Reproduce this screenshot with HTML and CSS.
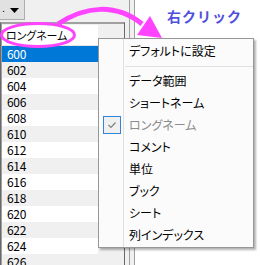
FILE: index.html
```html
<!DOCTYPE html>
<html lang="ja">
<head>
<meta charset="utf-8">
<link rel="stylesheet" href="styles.css">
</head>
<body>
<div class="page">
  <div class="panel">
    <div class="toolbar">
      <div class="dd"><span class="dot">.</span><svg class="tri" width="9" height="5" viewBox="0 0 9 5"><polygon points="0,0 9,0 4.5,5" fill="#000"/></svg></div>
    </div>
    <div class="grid">
      <div class="col">
        <div class="hdr">ロングネーム</div>
        <div class="row sel">600</div>
        <div class="row alt">602</div>
        <div class="row">604</div>
        <div class="row alt">606</div>
        <div class="row">608</div>
        <div class="row alt">610</div>
        <div class="row">612</div>
        <div class="row alt">614</div>
        <div class="row">616</div>
        <div class="row alt">618</div>
        <div class="row">620</div>
        <div class="row alt">622</div>
        <div class="row">624</div>
        <div class="row alt">626</div>
      </div>
    </div>
  </div>

  <div class="menu">
    <div class="item"><span class="ic"></span><span class="tx">デフォルトに設定</span></div>
    <div class="sep"></div>
    <div class="item"><span class="ic"></span><span class="tx">データ範囲</span></div>
    <div class="item"><span class="ic"></span><span class="tx">ショートネーム</span></div>
    <div class="item dis"><span class="ic"><span class="chk"><svg width="16" height="16" viewBox="0 0 16 16"><polyline points="4.5,8 7,10.5 11.5,5.5" fill="none" stroke="#808080" stroke-width="1.2"/></svg></span></span><span class="tx">ロングネーム</span></div>
    <div class="item"><span class="ic"></span><span class="tx">コメント</span></div>
    <div class="item"><span class="ic"></span><span class="tx">単位</span></div>
    <div class="item"><span class="ic"></span><span class="tx">ブック</span></div>
    <div class="item"><span class="ic"></span><span class="tx">シート</span></div>
    <div class="item"><span class="ic"></span><span class="tx">列インデックス</span></div>
  </div>

  <div class="note">右クリック</div>

  <svg class="anno" width="260" height="265" viewBox="0 0 260 265">
    <ellipse cx="38" cy="35" rx="36.5" ry="11.5" fill="none" stroke="#ff44ff" stroke-width="3"/>
    <path d="M58 24 C 85 6, 116 3, 142 24" fill="none" stroke="#ff44ff" stroke-width="5"/>
    <polygon points="162,38 137,35 150,16" fill="#ff44ff"/>
  </svg>
</div>
</body>
</html>
```

FILE: styles.css
```css
html, body {
  margin: 0;
  padding: 0;
  background: #ffffff;
}

body {
  font-family: "Noto Sans CJK JP", sans-serif;
  color: #000;
}

.page {
  position: relative;
  width: 260px;
  height: 265px;
  overflow: hidden;
  display: flex;
}

.panel {
  width: 135px;
  height: 265px;
  box-sizing: border-box;
  background: #f0f0f0;
  border-right: 1px solid #a0a0a0;
  box-shadow: inset -4px 0 0 #f0f0f0, inset -5px 0 0 #a0a0a0;
  display: flex;
  flex-direction: column;
}

.toolbar {
  height: 22px;
  flex: none;
}

.dd {
  width: 25px;
  height: 20px;
  box-sizing: border-box;
  border-right: 1px solid #adadad;
  border-bottom: 1px solid #adadad;
  background: #e1e1e1;
  display: flex;
  align-items: center;
  padding-left: 2px;
  gap: 5px;
}

.dot {
  font-family: "Liberation Sans", sans-serif;
  font-size: 11px;
  line-height: 11px;
  margin-top: -2px;
}

.tri {
  display: block;
  margin-top: 1px;
}

.grid {
  width: 125px;
  flex: 1;
  min-height: 0;
  overflow: hidden;
  box-sizing: border-box;
  border-top: 1px solid #a0a0a0;
  border-left: 1px solid #696969;
  border-right: 1px solid #696969;
  padding: 2px 0 0 1px;
  box-shadow: inset 1px 1px 0 #a0a0a0;
  background: #f0f0f0;
}

.col {
  width: 96px;
}

.hdr {
  height: 21px;
  box-sizing: border-box;
  background: #ffffff;
  font-size: 11px;
  line-height: 20px;
  padding-left: 4px;
  font-feature-settings: "palt";
  letter-spacing: -0.1px;
  border-bottom: 1px solid #e3e3e3;
}

.row {
  height: 16px;
  line-height: 16px;
  font-size: 12px;
  padding-left: 5px;
  letter-spacing: -0.3px;
  background: #ffffff;
}

.row.alt {
  background: #f0f0f0;
}

.row.sel {
  background: #0078d7;
  color: #ffffff;
}

.menu {
  position: absolute;
  left: 98px;
  top: 38px;
  width: 156px;
  box-sizing: border-box;
  border: 1px solid #979797;
  padding: 1px 0;
  background: linear-gradient(to right, transparent 24px, #e0e0e0 24px, #e0e0e0 25px, transparent 25px), #fbfbfb;
  box-shadow: 2px 2px 2px rgba(0, 0, 0, 0.3);
  font-size: 12px;
  font-feature-settings: "palt";
}

.item {
  height: 22px;
  display: flex;
  align-items: center;
}

.ic {
  width: 25px;
  height: 22px;
  flex: none;
  display: flex;
  align-items: center;
  padding-left: 4px;
  box-sizing: border-box;
}

.chk {
  width: 18px;
  height: 18px;
  box-sizing: border-box;
  border: 1px solid #2f86d6;
  background: #f0f0f0;
  display: flex;
  align-items: center;
  justify-content: center;
}

.chk svg {
  display: block;
}

.tx {
  padding-left: 5px;
  line-height: 22px;
}

.item.dis .tx {
  color: #8c8c8c;
}

.sep {
  height: 8px;
  margin-left: 26px;
  background: linear-gradient(#e0e0e0, #e0e0e0) no-repeat 0 4px / 100% 1px;
}

.note {
  position: absolute;
  left: 167px;
  top: 6px;
  font-size: 14px;
  font-weight: bold;
  letter-spacing: 1px;
  color: #5050dd;
  line-height: 20px;
}

.anno {
  position: absolute;
  left: 0;
  top: 0;
  pointer-events: none;
}
```
